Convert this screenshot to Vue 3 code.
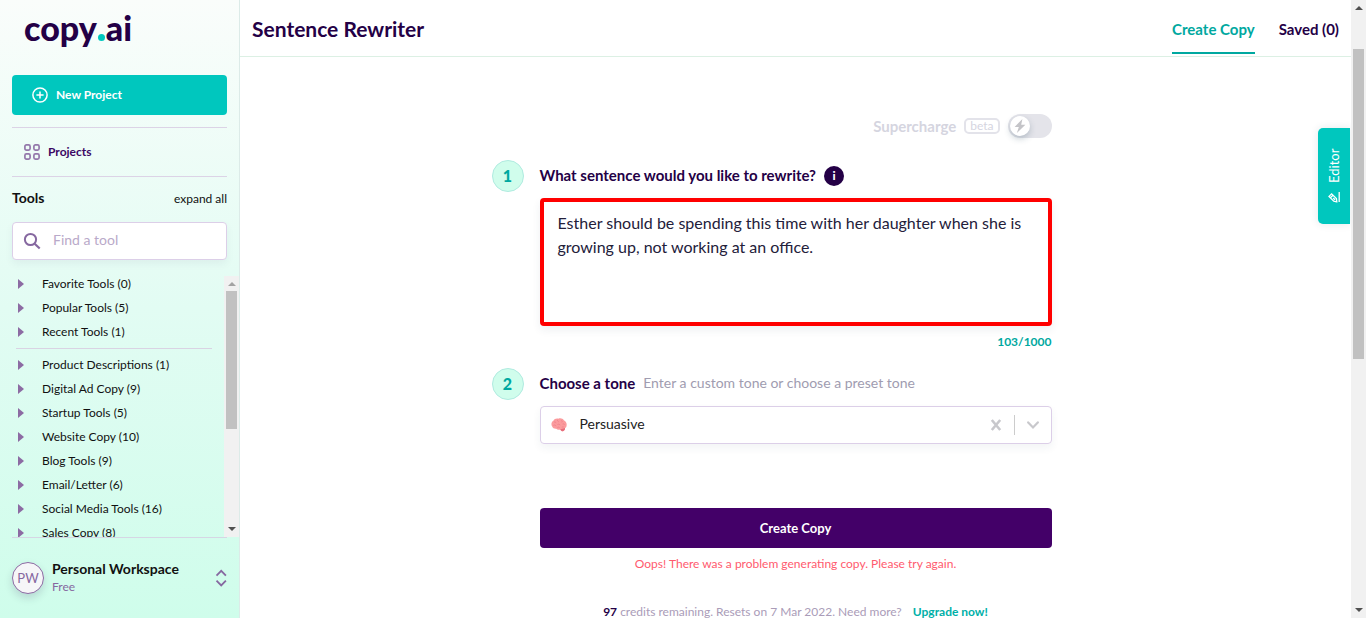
<script setup>
import { computed, ref } from 'vue'

const pinned = ['Favorite Tools (0)', 'Popular Tools (5)', 'Recent Tools (1)']
const categories = [
  'Product Descriptions (1)',
  'Digital Ad Copy (9)',
  'Startup Tools (5)',
  'Website Copy (10)',
  'Blog Tools (9)',
  'Email/Letter (6)',
  'Social Media Tools (16)',
  'Sales Copy (8)'
]
const search = ref('')
const supercharge = ref(false)
const sentence = ref('Esther should be spending this time with her daughter when she is growing up, not working at an office.')
const tone = ref('Persuasive')
const count = computed(() => sentence.value.length)
</script>

<template>
  <div class="app">
    <aside class="sidebar">
      <a class="logo" href="#" aria-label="copy.ai">copy<span class="dot"></span>ai</a>
      <button class="new-project" type="button">
        <svg width="16" height="16" viewBox="0 0 16 16" fill="none" stroke="currentColor" stroke-width="1.5">
          <circle cx="8" cy="8" r="7.1" />
          <path d="M8 4.4v7.2M4.4 8h7.2" />
        </svg>
        New Project
      </button>
      <nav class="projects">
        <a href="#">
          <svg width="16" height="16" viewBox="0 0 16 16" fill="none" stroke="#9478ab" stroke-width="1.7">
            <rect x="0.9" y="0.9" width="5.2" height="5.2" rx="1.5" />
            <rect x="9.9" y="0.9" width="5.2" height="5.2" rx="1.5" />
            <rect x="0.9" y="9.9" width="5.2" height="5.2" rx="1.5" />
            <rect x="9.9" y="9.9" width="5.2" height="5.2" rx="1.5" />
          </svg>
          Projects
        </a>
      </nav>
      <div class="tools-head">
        <h2>Tools</h2>
        <button type="button">expand all</button>
      </div>
      <label class="search">
        <svg width="18" height="18" viewBox="0 0 18 18" fill="none" stroke="#8668a0" stroke-width="2">
          <circle cx="7.5" cy="7.5" r="5.6" />
          <path d="M11.7 11.7l5 4.8" stroke-width="2.2" />
        </svg>
        <input v-model="search" type="text" placeholder="Find a tool" aria-label="Find a tool" />
      </label>
      <div class="tools">
        <div class="tools-list">
          <ul>
            <li v-for="t in pinned" :key="t">
              <button type="button"><i class="caret"></i>{{ t }}</button>
            </li>
          </ul>
          <hr />
          <ul>
            <li v-for="t in categories" :key="t">
              <button type="button"><i class="caret"></i>{{ t }}</button>
            </li>
          </ul>
        </div>
        <div class="bar inner" aria-hidden="true">
          <i class="up faint"></i>
          <div class="track"><div class="thumb"></div></div>
          <i class="down"></i>
        </div>
      </div>
      <button class="workspace" type="button">
        <span class="avatar">PW</span>
        <span class="who"><strong>Personal Workspace</strong><small>Free</small></span>
        <svg width="12" height="18" viewBox="0 0 12 18" fill="none" stroke="#8668a0" stroke-width="1.8">
          <path d="M1.5 6.6l4.7-4.8 4.7 4.8M1.5 11.6l4.7 4.8 4.7-4.8" />
        </svg>
      </button>
    </aside>

    <main class="main">
      <header class="topbar">
        <h1>Sentence Rewriter</h1>
        <nav>
          <a class="active" href="#">Create Copy</a>
          <a href="#">Saved (0)</a>
        </nav>
      </header>

      <form class="form" @submit.prevent>
        <label class="supercharge">
          <span class="sc-label">Supercharge</span>
          <span class="beta">beta</span>
          <input v-model="supercharge" type="checkbox" />
          <span class="switch">
            <span class="knob">
              <svg width="12" height="14" viewBox="0 0 12 14" fill="#c4c4c8"><path d="M8.4 0L0.6 8h4.2L2.9 14l8.5-8.3H7.2z" /></svg>
            </span>
          </span>
        </label>

        <div class="step">
          <span class="num">1</span>
          <div class="body">
            <div class="heading">
              <label for="sentence">What sentence would you like to rewrite?</label>
              <button class="info" type="button" aria-label="More information">i</button>
            </div>
            <textarea id="sentence" v-model="sentence" spellcheck="false"></textarea>
            <p class="count">{{ count }}/1000</p>
          </div>
        </div>

        <div class="step second">
          <span class="num">2</span>
          <div class="body">
            <div class="heading">
              <label for="tone">Choose a tone</label>
              <span class="hint">Enter a custom tone or choose a preset tone</span>
            </div>
            <div class="combo">
              <svg class="brain" width="16" height="14" viewBox="0 0 16 14">
                <path d="M1.2 8.6C-.2 6.6.4 3.8 2.4 2.8 3.2 1 5.6.2 7.2.8 9.4-.2 11.8.6 12.8 2.2c2 .6 3.2 3 2.8 5.2-.1 1.3-.7 2.2-1.6 2.6.2 1.6-.8 3-2.2 3.2-1.2.1-2-.7-2.4-1.8-1.6.6-3.2.4-4.2-.6-1.8.2-3.4-.6-4-2.2z" fill="#fb9b9d" />
                <path d="M9.2 11.2c1.4-.2 3.2-.4 4.8-1.2.2 1.6-.8 3-2.2 3.2-1.2.1-2-.7-2.6-2z" fill="#e56c7b" />
                <path d="M3 4.2c1-.6 2 0 2 1M6.6 1.8c-.4 1 .2 1.8 1.2 1.8M10.4 2.4c.8.4 1 1.2.4 2M2.4 7.4c1-.8 2.4-.4 2.6.8M6.4 6.6c1-.8 2.4-.4 2.6.6M11.6 6c.8-.4 1.8 0 2 .8M6.4 9.6c.6-.6 1.6-.6 2.2 0M10.8 9.2c.8-.4 1.4-.4 2-.2" fill="none" stroke="#ec7b86" stroke-width=".7" />
              </svg>
              <input id="tone" v-model="tone" type="text" />
              <button type="button" aria-label="Clear tone">
                <svg width="12" height="12" viewBox="0 0 12 12" stroke="#c8c8cc" stroke-width="2.6"><path d="M1.8 1l8.4 10M10.2 1l-8.4 10" /></svg>
              </button>
              <i class="sep"></i>
              <button type="button" aria-label="Show tones">
                <svg width="12" height="8" viewBox="0 0 12 8" fill="none" stroke="#c8c8cc" stroke-width="2.2" stroke-linecap="round"><path d="M1.2 1.4L6 6.4l4.8-5" /></svg>
              </button>
            </div>
            <button class="submit" type="submit">Create Copy</button>
            <p class="error">Oops! There was a problem generating copy. Please try again.</p>
            <p class="credits"><b>97</b> credits remaining. Resets on 7 Mar 2022. Need more? <a href="#">Upgrade now!</a></p>
          </div>
        </div>
      </form>

      <button class="editor" type="button">
        <svg width="12" height="12" viewBox="0 0 12 12" fill="none" stroke="currentColor" stroke-width="1.3">
          <path d="M1.2 8.8l.6-3L6.6 1l2.6 2.6-4.8 4.8zM5.2 2.4L7.8 5M3.2 7l1.8-1.8M1 11.2h10" />
        </svg>
        Editor
      </button>
    </main>

    <div class="bar page" aria-hidden="true">
      <i class="up"></i>
      <div class="track"><div class="thumb"></div></div>
      <i class="down"></i>
    </div>
  </div>
</template>

<style>
body {
  margin: 0;
}
</style>

<style scoped>
* {
  box-sizing: border-box;
}
.app {
  display: flex;
  height: 100vh;
  overflow: hidden;
  background: #fff;
  color: #240046;
  font: 12px/24px Lato, "Liberation Sans", sans-serif;
}
button,
input,
textarea {
  font: inherit;
  color: inherit;
  border: 0;
  background: none;
  padding: 0;
  margin: 0;
  outline: 0;
}
a {
  color: inherit;
  text-decoration: none;
}
h1,
h2,
p,
ul {
  margin: 0;
  padding: 0;
  list-style: none;
}
svg {
  display: block;
  flex: none;
}

/* Sidebar */
.sidebar {
  flex: none;
  display: flex;
  flex-direction: column;
  width: 240px;
  border-right: 1px solid #dcebe8;
  background: linear-gradient(#fafdfb, #e2fcf3 50%, #cffdeb);
  color: #111;
}
.logo {
  margin: 6px 24px 0;
  height: 69px;
  color: #240046;
  font: 900 34px/44px Lato, sans-serif;
}
.dot {
  display: inline-block;
  width: 7px;
  height: 7px;
  margin: 0 1px;
  border-radius: 50%;
  background: #00c7be;
}
.new-project {
  display: flex;
  align-items: center;
  gap: 8px;
  height: 40px;
  flex: none;
  margin: 0 12px 12px;
  padding-left: 20px;
  border-radius: 4px;
  background: #00c7be;
  color: #fff;
  font-weight: 700;
}
.projects {
  margin: 0 12px;
  padding: 12px;
  border: solid #dcd3e6;
  border-width: 1px 0;
}
.projects a {
  display: flex;
  align-items: center;
  gap: 8px;
  color: #3b0764;
  font-weight: 700;
}
.tools-head {
  display: flex;
  justify-content: space-between;
  align-items: baseline;
  margin: 9px 12px 11px;
}
.tools-head h2 {
  font-size: 14px;
  font-weight: 700;
}
.tools-head button {
  height: 24px;
}
.search {
  display: flex;
  flex: none;
  align-items: center;
  gap: 12px;
  height: 38px;
  margin: 0 12px 12px;
  padding: 0 10px;
  border: 1px solid #dccfe8;
  border-radius: 4px;
  background: #fff;
  box-shadow: 0 4px 8px rgba(36, 0, 70, 0.05);
}
.search input {
  min-width: 0;
  flex: 1;
  height: 24px;
  padding-bottom: 2px;
  font-size: 14px;
}
.search input::placeholder {
  color: #b9a9c9;
}
.tools {
  display: flex;
  flex: 1;
  min-height: 0;
  overflow: hidden;
}
.tools-list {
  flex: 1;
  overflow: hidden;
  padding: 0 12px 0 16px;
}
.tools-list hr {
  margin: 4px 0;
  border: 0;
  border-top: 1px solid #d9d3e3;
}
.tools-list li button {
  display: flex;
  align-items: center;
  height: 24px;
}
.caret {
  width: 0;
  margin: 0 18px 0 2px;
  border: solid transparent;
  border-width: 5px 0 5px 6px;
  border-left-color: #8c6ba3;
}
.workspace {
  display: flex;
  align-items: center;
  gap: 8px;
  flex: none;
  height: 81px;
  margin: 0 12px;
  border-top: 1px solid #d6d6e4;
  text-align: left;
}
.avatar {
  width: 32px;
  height: 32px;
  border: 1px solid #8c6ba3;
  border-radius: 50%;
  background: #f6f6f8;
  color: #8668a0;
  font-size: 13px;
  line-height: 30px;
  text-align: center;
  box-shadow: 0 4px 8px rgba(36, 0, 70, 0.15);
}
.who {
  flex: 1;
  display: flex;
  flex-direction: column;
  line-height: 18px;
}
.who strong {
  font-size: 14px;
}
.who small {
  color: #8668a0;
  font-size: 12px;
}

/* Scroll bars */
.bar {
  display: flex;
  flex: none;
  flex-direction: column;
  align-items: center;
  width: 15px;
  padding: 6px 0;
  background: #f1f1f1;
}
.bar .track {
  flex: 1;
  width: 11px;
  padding: 5px 0;
}
.bar .thumb {
  background: #c1c1c1;
}
.inner {
  margin-top: 4px;
}
.inner .thumb {
  height: 138px;
}
.page .track {
  padding-top: 39px;
}
.page .thumb {
  height: 310px;
}
.up,
.down {
  border: 4px solid transparent;
}
.up {
  border-top: 0;
  border-bottom-color: #505050;
}
.up.faint {
  border-bottom-color: #a3a3a3;
}
.down {
  border-bottom: 0;
  border-top-color: #505050;
}

/* Main area */
.main {
  position: relative;
  flex: 1;
  min-width: 0;
  overflow: hidden;
}
.topbar {
  display: flex;
  justify-content: space-between;
  height: 57px;
  padding: 0 12px;
  border-bottom: 1px solid #dcf0e4;
}
.topbar h1 {
  font-size: 21px;
  line-height: 58px;
  font-weight: 700;
}
.topbar nav {
  display: flex;
  gap: 24px;
  font-size: 15px;
  font-weight: 700;
  line-height: 58px;
}
.topbar nav a {
  height: 54px;
}
.topbar nav .active {
  border-bottom: 2px solid #00a8a0;
  color: #00a8a0;
}
.form {
  max-width: 608px;
  margin: 0 auto;
  padding-top: 57px;
}
.supercharge {
  display: flex;
  align-items: center;
  justify-content: flex-end;
  gap: 8px;
  margin: 0 48px 22px 0;
  color: #d5d5df;
}
.supercharge input {
  position: absolute;
  opacity: 0;
}
.sc-label {
  font-size: 15px;
  font-weight: 700;
}
.beta {
  padding: 0 4px;
  border: 2px solid #e3e3ea;
  border-radius: 5px;
  line-height: 12px;
}
.switch {
  width: 44px;
  height: 24px;
  padding: 2px;
  border-radius: 12px;
  background: #e4e4ea;
}
.knob {
  display: grid;
  place-items: center;
  width: 20px;
  height: 20px;
  border-radius: 50%;
  background: #fff;
  box-shadow: 0 3px 6px rgba(36, 70, 90, 0.25);
}
.step {
  display: flex;
  gap: 16px;
  padding-right: 48px;
}
.second {
  margin-top: 14px;
}
.num {
  flex: none;
  width: 32px;
  height: 32px;
  border: 1px solid #b0ebe0;
  border-radius: 50%;
  background: #d0fdec;
  color: #00a8a0;
  font-size: 16px;
  font-weight: 900;
  line-height: 30px;
  text-align: center;
}
.body {
  flex: 1;
  min-width: 0;
}
.heading {
  display: flex;
  align-items: center;
  gap: 8px;
  height: 32px;
  margin-bottom: 6px;
  font-size: 14px;
  line-height: 30px;
}
.heading > * {
  height: 32px;
}
.heading label {
  font-size: 15px;
  font-weight: 700;
}
.hint {
  color: #a09cb0;
}
.heading .info {
  width: 20px;
  height: 20px;
  border-radius: 50%;
  background: #240046;
  color: #fff;
  font-size: 12px;
  font-weight: 900;
  line-height: 20px;
}
textarea {
  display: block;
  width: 100%;
  height: 128px;
  padding: 9px 14px;
  border: 4px solid #f00;
  border-radius: 4px;
  background: #fff;
  color: #23203a;
  font-size: 16px;
  resize: none;
  box-shadow: 0 4px 8px rgba(36, 70, 90, 0.08);
}
.count {
  margin-top: 4px;
  color: #00a8a0;
  font-weight: 700;
  text-align: right;
}
.combo {
  display: flex;
  align-items: center;
  height: 38px;
  padding: 0 12px 0 10px;
  border: 1px solid #dccfe8;
  border-radius: 4px;
  box-shadow: 0 4px 8px rgba(36, 70, 90, 0.06);
  font-size: 14px;
}
.combo input {
  flex: 1;
  min-width: 0;
  height: 24px;
  margin-left: 13px;
  padding-bottom: 2px;
  color: #222;
}
.sep {
  width: 1px;
  height: 20px;
  margin: 0 12px;
  background: #ccc;
}
.submit {
  width: 100%;
  height: 40px;
  margin-top: 64px;
  border-radius: 4px;
  background: #430068;
  color: #fff;
  font-size: 13px;
  font-weight: 700;
}
.error {
  margin-top: 4px;
  color: #ff5a6e;
  text-align: center;
}
.credits {
  margin-top: 24px;
  color: #aa9cb8;
  text-align: center;
}
.credits b {
  color: #240046;
}
.credits a {
  margin-left: 8px;
  color: #00b0a8;
  font-weight: 700;
}
.editor {
  position: absolute;
  top: 128px;
  right: 1px;
  display: flex;
  align-items: center;
  justify-content: center;
  gap: 8px;
  width: 32px;
  height: 96px;
  border-radius: 0 5px 5px 0;
  background: #00c7be;
  box-shadow: 0 0 8px rgba(36, 70, 90, 0.12);
  color: #fff;
  font-size: 13px;
  writing-mode: vertical-rl;
  transform: rotate(180deg);
}
.editor svg {
  transform: rotate(90deg);
}
</style>
